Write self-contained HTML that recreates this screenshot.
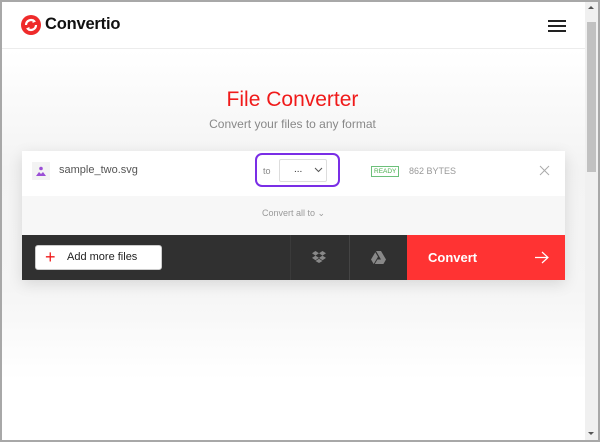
<!DOCTYPE html>
<html><head><style>
*{margin:0;padding:0;box-sizing:border-box}
body{width:600px;height:442px;overflow:hidden;background:#fff;font-family:"Liberation Sans",sans-serif;position:relative}
.frame{position:absolute;left:0;top:0;width:600px;height:442px;border:2px solid #a8a8a8}
.sb{position:absolute;left:585px;top:2px;width:13px;height:438px;background:#f0f0f0}
.thumb{position:absolute;left:587px;top:22px;width:9px;height:150px;background:#c1c1c1}
.hdr{position:absolute;left:2px;top:2px;width:583px;height:47px;border-bottom:1px solid #ececec;background:#fff}
.main{position:absolute;left:2px;top:50px;width:583px;height:390px;background:linear-gradient(#fff 0,#f3f3f3 120px,#f5f5f5 240px,#fff 330px)}
.abs{position:absolute}
</style></head><body>
<div class="main"></div>
<div class="hdr"></div>
<svg class="abs" style="left:21px;top:15px" width="20" height="20" viewBox="0 0 20 20"><circle cx="10" cy="10" r="10" fill="#ef2b2b"/><path d="M5 10a5 5 0 0 1 8.5-3.5M15 10a5 5 0 0 1-8.5 3.5" stroke="#fff" stroke-width="2.2" fill="none"/><path d="M12 4l3 2.5-3.5 1.5z M8 16l-3-2.5 3.5-1.5z" fill="#fff"/></svg>
<div class="abs" style="left:45px;top:15px;font-size:16.5px;font-weight:bold;color:#111;letter-spacing:-0.2px">Convertio</div>
<div class="abs" style="left:548px;top:20px;width:18px;height:2px;background:#222;box-shadow:0 5px 0 #222,0 10px 0 #222"></div>
<div class="abs" style="left:0;width:585px;top:88px;text-align:center;font-size:21px;color:#f01a1a">File Converter</div>
<div class="abs" style="left:0;width:585px;top:117px;text-align:center;font-size:12px;color:#888">Convert your files to any format</div>
<div class="abs" style="left:22px;top:151px;width:543px;height:129px;box-shadow:0 4px 14px rgba(0,0,0,.12)"></div>
<div class="abs" style="left:22px;top:151px;width:543px;height:45px;background:#fff"></div>
<div class="abs" style="left:32px;top:162px;width:18px;height:18px;background:#f3f3f3"></div>
<svg class="abs" style="left:36px;top:166px" width="10" height="10"><circle cx="5" cy="2.5" r="1.8" fill="#9b4fd6"/><path d="M0 10l3-4 2 2 2-2 3 4z" fill="#9b4fd6"/></svg>
<div class="abs" style="left:59px;top:164px;font-size:11px;color:#555">sample_two.svg</div>
<div class="abs" style="left:255px;top:153px;width:85px;height:34px;border:2px solid #7a2ee6;border-radius:7px"></div>
<div class="abs" style="left:263px;top:166px;font-size:9px;color:#888">to</div>
<div class="abs" style="left:279px;top:159px;width:48px;height:23px;border:1px solid #ddd;border-radius:2px;background:#fff"></div>
<div class="abs" style="left:294px;top:164px;font-size:10px;color:#333">...</div>
<svg class="abs" style="left:314px;top:167px" width="9" height="6"><path d="M1 1l3.5 3.5L8 1" stroke="#555" fill="none"/></svg>
<div class="abs" style="left:371px;top:166px;border:1px solid #6cc07a;color:#4caf50;font-size:6.5px;padding:1px 2px">READY</div>
<div class="abs" style="left:409px;top:166px;font-size:9px;color:#999">862 BYTES</div>
<svg class="abs" style="left:539px;top:165px" width="11" height="11"><path d="M1 1l9 9M10 1l-9 9" stroke="#aaa"/></svg>
<div class="abs" style="left:22px;top:196px;width:543px;height:39px;background:#f7f7f7"></div>
<div class="abs" style="left:262px;top:208px;font-size:9px;color:#999">Convert all to &#8964;</div>
<div class="abs" style="left:22px;top:235px;width:385px;height:45px;background:#303030"></div>
<div class="abs" style="left:349px;top:235px;width:1px;height:45px;background:#444"></div>
<div class="abs" style="left:290px;top:235px;width:1px;height:45px;background:#3a3a3a"></div>
<div class="abs" style="left:35px;top:245px;width:127px;height:25px;background:#fff;border-radius:3px;border:1px solid #ccc"></div>
<div class="abs" style="left:45px;top:247px;font-size:18px;color:#f01a1a">+</div>
<div class="abs" style="left:67px;top:251px;font-size:11px;color:#222">Add more files</div>
<svg class="abs" style="left:312px;top:251px" width="14" height="12"><path d="M3.5 0L0 2.3l3.5 2.3L7 2.3zM10.5 0L7 2.3l3.5 2.3L14 2.3zM0 6.9l3.5 2.3L7 6.9 3.5 4.6zM10.5 4.6L7 6.9l3.5 2.3L14 6.9zM3.5 10l3.5 2 3.5-2L7 7.7z" fill="#888"/></svg>
<svg class="abs" style="left:371px;top:251px" width="15" height="13"><path d="M5 0h5l5 8.5h-5zM4.3 1.2L7 5.8 2.7 13 0 8.5zM3.8 13l2.6-4.5H15L12.4 13z" fill="#888"/></svg>
<div class="abs" style="left:407px;top:235px;width:158px;height:45px;background:#ff3333"></div>
<div class="abs" style="left:428px;top:250px;font-size:13px;font-weight:bold;color:#fff">Convert</div>
<svg class="abs" style="left:535px;top:251px" width="14" height="13"><path d="M0 6.5h13M7 1l6 5.5L7 12" stroke="#fff" fill="none" stroke-width="1.2"/></svg>
<div class="sb"></div><div class="thumb"></div>
<div class="abs" style="left:588px;top:6px;width:0;height:0;border:3px solid transparent;border-bottom:3px solid #555;border-top:0"></div>
<div class="abs" style="left:588px;top:432px;width:0;height:0;border:3px solid transparent;border-top:3px solid #555;border-bottom:0"></div>
<div class="frame"></div>
</body></html>
